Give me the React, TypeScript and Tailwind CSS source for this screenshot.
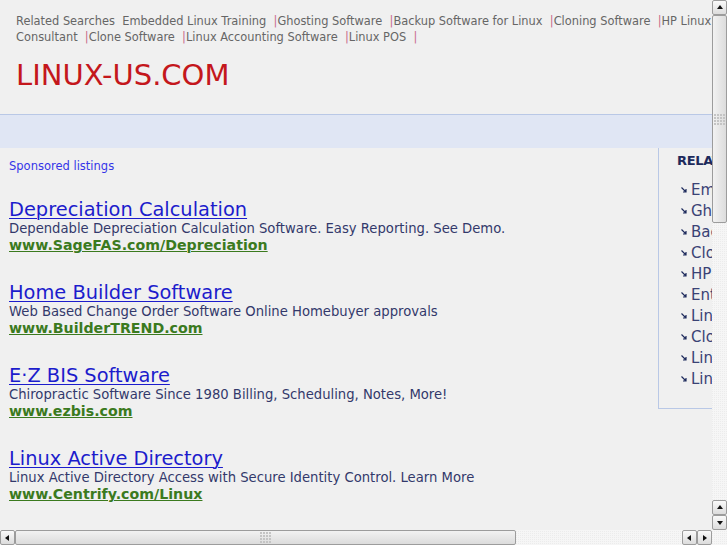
import React from 'react';

const topLinks = [
  'Embedded Linux Training',
  'Ghosting Software',
  'Backup Software for Linux',
  'Cloning Software',
  'HP Linux Consultant',
  'Clone Software',
  'Linux Accounting Software',
  'Linux POS',
];

const ads = [
  {
    title: 'Depreciation Calculation',
    desc: 'Dependable Depreciation Calculation Software. Easy Reporting. See Demo.',
    url: 'www.SageFAS.com/Depreciation',
  },
  {
    title: 'Home Builder Software',
    desc: 'Web Based Change Order Software Online Homebuyer approvals',
    url: 'www.BuilderTREND.com',
  },
  {
    title: 'E·Z BIS Software',
    desc: 'Chiropractic Software Since 1980 Billing, Scheduling, Notes, More!',
    url: 'www.ezbis.com',
  },
  {
    title: 'Linux Active Directory',
    desc: 'Linux Active Directory Access with Secure Identity Control. Learn More',
    url: 'www.Centrify.com/Linux',
  },
];

const related = [
  'Embedded Linux Training',
  'Ghosting Software',
  'Backup Software for Linux',
  'Cloning Software',
  'HP Linux Consultant',
  'Enterprise Linux',
  'Linux Accounting Software',
  'Clone Software',
  'Linux POS',
  'Linux Help',
];

type Dir = 'up' | 'down' | 'left' | 'right';

const Arrow = ({ dir }: { dir: Dir }) => {
  const pts = {
    up: '1,5 4,1 7,5',
    down: '1,2 7,2 4,6',
    left: '5,1 5,7 1,4',
    right: '2,1 2,7 6,4',
  }[dir];
  return (
    <svg width="8" height="8" viewBox="0 0 8 8">
      <polygon points={pts} fill="#111" />
    </svg>
  );
};

const ScrollButton = ({ dir }: { dir: Dir }) => (
  <div className="w-[15px] h-[15px] shrink-0 flex items-center justify-center border border-[#9c9c9c] rounded-[2px] bg-gradient-to-b from-[#fafafa] to-[#dcdcdc]">
    <Arrow dir={dir} />
  </div>
);

const Grip = () => (
  <div className="grid grid-cols-4 gap-[1px]">
    {Array.from({ length: 16 }).map((_, i) => (
      <div key={i} className="w-[2px] h-[2px] bg-[#c4c4c4]" />
    ))}
  </div>
);

const track =
  'bg-[#f6f6f6] bg-[linear-gradient(45deg,#ececec_25%,transparent_25%,transparent_75%,#ececec_75%)] bg-[length:2px_2px]';

const App = () => {
  return (
    <div className="w-[727px] h-[545px] flex flex-col overflow-hidden bg-[#f0f0f0] font-['DejaVu_Sans',sans-serif]">
      <div className="flex flex-1 min-h-0">
        {/* page */}
        <div className="flex-1 overflow-hidden">
          <div className="w-[780px]">
            {/* header */}
            <div className="pl-4 pt-[13px] w-[750px] text-[11.4px] leading-[16px] text-[#666]">
              <span>Related Searches&nbsp; </span>
              {topLinks.map((l, i) => (
                <span key={i}>
                  {i > 0 && <span className="text-[#c86a8a]">|</span>}
                  {l}&nbsp;{' '}
                </span>
              ))}
              <span className="text-[#c86a8a]">|</span>
            </div>
            <div className="pl-4 pt-[14px] h-[69px] text-[29px] leading-[32px] text-[#c4171c]">
              LINUX-US.COM
            </div>
            <div className="h-[34px] border-t border-[#b9c8e6] bg-[#e0e6f4]" />

            <div className="flex">
              {/* left column */}
              <div className="w-[658px] shrink-0 pl-[9px]">
                <div className="pt-[10px] h-[53px] text-[11.5px] leading-[16px] text-[#3535e8]">
                  Sponsored listings
                </div>
                {ads.map((ad, i) => (
                  <div key={i} className="h-[83px]">
                    <div className="text-[19.4px] leading-[18px] text-[#1c1ccc] underline decoration-1 underline-offset-2">
                      {ad.title}
                    </div>
                    <div className="text-[13.2px] leading-[17px] text-[#33396b] mt-[1px]">{ad.desc}</div>
                    <div className="text-[14.2px] leading-[17px] font-bold text-[#3b7a1e] underline decoration-1">
                      {ad.url}
                    </div>
                  </div>
                ))}
              </div>

              {/* right column */}
              <div className="flex-1 h-[261px] border-l border-b border-[#b9c8e6] pl-[18px] pt-[5px]">
                <div className="text-[13px] leading-[16px] font-bold text-[#1d2a5c] tracking-tight">RELATED</div>
                <ul className="mt-[11px]">
                  {related.map((r, i) => (
                    <li key={i} className="flex items-center h-[21px] whitespace-nowrap">
                      <svg width="6" height="6" viewBox="0 0 6 6" className="ml-[4px] mr-[4px] -mt-[2px]">
                        <path d="M0.5 0.5 L5 5 M2 5 H5 V2" stroke="#1d2a5c" strokeWidth="1.2" fill="none" />
                      </svg>
                      <span className="text-[15px] text-[#3a4275]">{r}</span>
                    </li>
                  ))}
                </ul>
              </div>
            </div>
          </div>
        </div>

        {/* vertical scrollbar */}
        <div className={`w-[15px] flex flex-col ${track}`}>
          <ScrollButton dir="up" />
          <div className="h-[208px] shrink-0 border border-[#9c9c9c] rounded-[2px] bg-gradient-to-r from-[#f2f2f2] to-[#dcdcdc] flex items-center justify-center">
            <Grip />
          </div>
          <div className="flex-1" />
          <ScrollButton dir="up" />
          <ScrollButton dir="down" />
        </div>
      </div>

      {/* horizontal scrollbar */}
      <div className={`h-[15px] flex ${track}`}>
        <ScrollButton dir="left" />
        <div className="w-[501px] shrink-0 border border-[#9c9c9c] rounded-[2px] bg-gradient-to-b from-[#f2f2f2] to-[#dcdcdc] flex items-center justify-center">
          <Grip />
        </div>
        <div className="flex-1" />
        <ScrollButton dir="left" />
        <ScrollButton dir="right" />
        <div className="w-[15px] shrink-0" />
      </div>
    </div>
  );
};

export default App;
